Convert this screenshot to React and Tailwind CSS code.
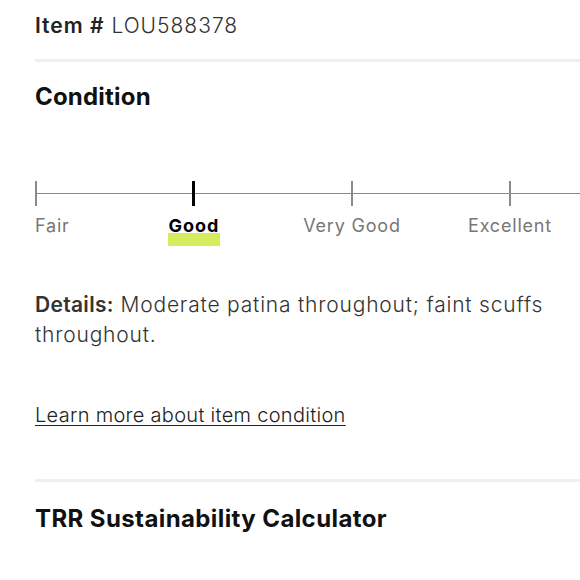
export default function App() {
  const steps = ["Fair", "Good", "Very Good", "Excellent"];
  const current = 1;

  return (
    <div className="w-[580px] h-[580px] overflow-hidden bg-white pl-[35px] font-['Inter','Liberation_Sans',sans-serif] text-[#222]">
      {/* Item number */}
      <p className="pt-[12px] text-[21px] leading-[28px] tracking-[1px]">
        <span className="font-semibold">Item #</span>{" "}
        <span className="font-light text-[#333]">LOU588378</span>
      </p>

      <div className="mt-[19px] h-[3px] w-[600px] bg-[#efefef]"></div>

      {/* Condition */}
      <h2 className="mt-[19px] text-[24px] leading-[32px] font-bold tracking-[0.2px] text-[#111]">Condition</h2>

      {/* Scale */}
      <div className="mt-[68px] flex h-[25px] w-[700px]">
        {steps.map((s, i) => (
          <div key={s} className="relative w-[158px] shrink-0 flex items-center">
            <div
              className={
                i === current
                  ? "absolute left-[-1px] top-0 h-full w-[3px] bg-black"
                  : "absolute left-0 top-0 h-full w-[2px] bg-[#8a8a8a]"
              }
            ></div>
            <div className="h-px w-full bg-[#8a8a8a]"></div>
          </div>
        ))}
        <div className="flex flex-1 items-center">
          <div className="h-px w-full bg-[#8a8a8a]"></div>
        </div>
      </div>

      {/* Labels */}
      <div className="mt-[8px] flex text-[18px] leading-[24px] tracking-[0.8px] text-[#777]">
        {steps.map((s, i) => (
          <div key={s} className="relative w-[158px] shrink-0">
            {i === 0 ? (
              <span>{s}</span>
            ) : (
              <div className="absolute left-[1px] top-0 flex w-0 justify-center whitespace-nowrap">
                {i === current ? (
                  <span className="relative font-bold tracking-[1px] text-black">
                    <span className="absolute left-[-1px] right-[-1px] top-[18.5px] h-[13px] bg-[#d6ec5e]"></span>
                    <span className="relative">{s}</span>
                  </span>
                ) : (
                  <span>{s}</span>
                )}
              </div>
            )}
          </div>
        ))}
      </div>

      {/* Details */}
      <p className="mt-[52px] pr-[25px] text-[21px] leading-[30px] font-light tracking-[0.8px] text-[#333]">
        <span className="font-semibold tracking-[0.3px]">Details:</span> Moderate patina throughout; faint scuffs throughout.
      </p>

      <a href="#" className="mt-[50px] block w-max text-[20px] leading-[30px] font-light tracking-[0.3px] text-[#222] underline underline-offset-[3px] decoration-1">
        Learn more about item condition
      </a>

      <div className="mt-[49px] h-[3px] w-[600px] bg-[#efefef]"></div>

      <h2 className="mt-[21px] text-[24px] leading-[32px] font-bold tracking-[0.4px] text-[#111]">TRR Sustainability Calculator</h2>
    </div>
  );
}
